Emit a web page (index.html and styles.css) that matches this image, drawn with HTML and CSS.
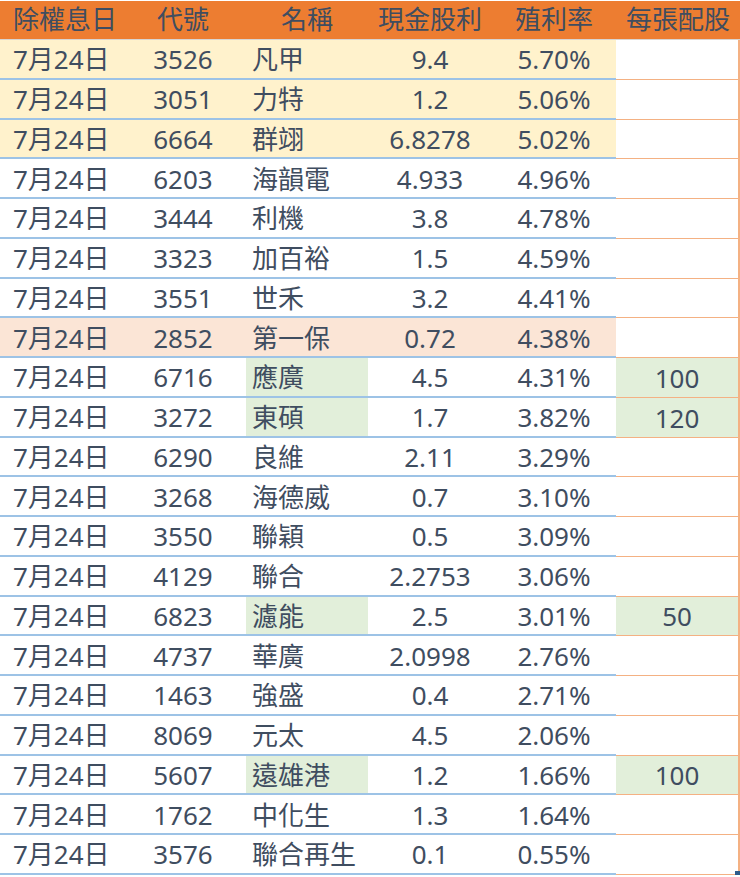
FILE: index.html
```html
<!DOCTYPE html>
<html lang="zh-Hant">
<head>
<meta charset="utf-8">
<link rel="stylesheet" href="styles.css">
</head>
<body>
<div class="sheet">
  <div class="row head">
    <div class="c c1">除權息日</div><div class="c c2">代號</div><div class="c c3 ctr">名稱</div><div class="c c4">現金股利</div><div class="c c5">殖利率</div><div class="c c6">每張配股</div>
  </div>
  <div class="row yellow"><div class="c c1">7月24日</div><div class="c c2">3526</div><div class="c c3">凡甲</div><div class="c c4">9.4</div><div class="c c5">5.70%</div><div class="c c6"></div></div>
  <div class="row yellow"><div class="c c1">7月24日</div><div class="c c2">3051</div><div class="c c3">力特</div><div class="c c4">1.2</div><div class="c c5">5.06%</div><div class="c c6"></div></div>
  <div class="row yellow"><div class="c c1">7月24日</div><div class="c c2">6664</div><div class="c c3">群翊</div><div class="c c4">6.8278</div><div class="c c5">5.02%</div><div class="c c6"></div></div>
  <div class="row"><div class="c c1">7月24日</div><div class="c c2">6203</div><div class="c c3">海韻電</div><div class="c c4">4.933</div><div class="c c5">4.96%</div><div class="c c6"></div></div>
  <div class="row"><div class="c c1">7月24日</div><div class="c c2">3444</div><div class="c c3">利機</div><div class="c c4">3.8</div><div class="c c5">4.78%</div><div class="c c6"></div></div>
  <div class="row"><div class="c c1">7月24日</div><div class="c c2">3323</div><div class="c c3">加百裕</div><div class="c c4">1.5</div><div class="c c5">4.59%</div><div class="c c6"></div></div>
  <div class="row"><div class="c c1">7月24日</div><div class="c c2">3551</div><div class="c c3">世禾</div><div class="c c4">3.2</div><div class="c c5">4.41%</div><div class="c c6"></div></div>
  <div class="row salmon"><div class="c c1">7月24日</div><div class="c c2">2852</div><div class="c c3">第一保</div><div class="c c4">0.72</div><div class="c c5">4.38%</div><div class="c c6"></div></div>
  <div class="row"><div class="c c1">7月24日</div><div class="c c2">6716</div><div class="c c3 green">應廣</div><div class="c c4">4.5</div><div class="c c5">4.31%</div><div class="c c6 green">100</div></div>
  <div class="row"><div class="c c1">7月24日</div><div class="c c2">3272</div><div class="c c3 green">東碩</div><div class="c c4">1.7</div><div class="c c5">3.82%</div><div class="c c6 green">120</div></div>
  <div class="row"><div class="c c1">7月24日</div><div class="c c2">6290</div><div class="c c3">良維</div><div class="c c4">2.11</div><div class="c c5">3.29%</div><div class="c c6"></div></div>
  <div class="row"><div class="c c1">7月24日</div><div class="c c2">3268</div><div class="c c3">海德威</div><div class="c c4">0.7</div><div class="c c5">3.10%</div><div class="c c6"></div></div>
  <div class="row"><div class="c c1">7月24日</div><div class="c c2">3550</div><div class="c c3">聯穎</div><div class="c c4">0.5</div><div class="c c5">3.09%</div><div class="c c6"></div></div>
  <div class="row"><div class="c c1">7月24日</div><div class="c c2">4129</div><div class="c c3">聯合</div><div class="c c4">2.2753</div><div class="c c5">3.06%</div><div class="c c6"></div></div>
  <div class="row"><div class="c c1">7月24日</div><div class="c c2">6823</div><div class="c c3 green">濾能</div><div class="c c4">2.5</div><div class="c c5">3.01%</div><div class="c c6 green">50</div></div>
  <div class="row"><div class="c c1">7月24日</div><div class="c c2">4737</div><div class="c c3">華廣</div><div class="c c4">2.0998</div><div class="c c5">2.76%</div><div class="c c6"></div></div>
  <div class="row"><div class="c c1">7月24日</div><div class="c c2">1463</div><div class="c c3">強盛</div><div class="c c4">0.4</div><div class="c c5">2.71%</div><div class="c c6"></div></div>
  <div class="row"><div class="c c1">7月24日</div><div class="c c2">8069</div><div class="c c3">元太</div><div class="c c4">4.5</div><div class="c c5">2.06%</div><div class="c c6"></div></div>
  <div class="row"><div class="c c1">7月24日</div><div class="c c2">5607</div><div class="c c3 green">遠雄港</div><div class="c c4">1.2</div><div class="c c5">1.66%</div><div class="c c6 green">100</div></div>
  <div class="row"><div class="c c1">7月24日</div><div class="c c2">1762</div><div class="c c3">中化生</div><div class="c c4">1.3</div><div class="c c5">1.64%</div><div class="c c6"></div></div>
  <div class="row last"><div class="c c1">7月24日</div><div class="c c2">3576</div><div class="c c3">聯合再生</div><div class="c c4">0.1</div><div class="c c5">0.55%</div><div class="c c6"><span class="handle"></span></div></div>
</div>
</body>
</html>
```

FILE: styles.css
```css
html, body {
  margin: 0;
  padding: 0;
  background: #ffffff;
}
.sheet {
  width: 740px;
  font-family: "Noto Sans", "Noto Sans CJK TC", sans-serif;
  font-size: 26px;
  color: #3f4d60;
  padding-top: 1px;
}
.row {
  display: grid;
  grid-template-columns: 120px 126px 122px 124px 124px 124px;
  height: 39.75px;
}
.row.head {
  height: 39px;
  background: #ed7d31;
  border-bottom: 1.5px solid #d9d4d0;
  box-sizing: border-box;
}
.c {
  box-sizing: border-box;
  display: flex;
  align-items: center;
  justify-content: center;
  white-space: nowrap;
  border-bottom: 2px solid #9dc3e6;
  line-height: 1;
  padding-top: 1px;
}
.head .c {
  border-bottom: none;
  padding-top: 0;
  padding-bottom: 2px;
}
.c1 {
  justify-content: flex-start;
  padding-left: 13px;
}
.c3 {
  justify-content: flex-start;
  padding-left: 6px;
}
.c3.ctr {
  justify-content: center;
  padding-left: 0;
}
.c6 {
  border-bottom: 1.5px solid #f4b183;
  border-right: 2px solid #f4b183;
  background: #ffffff;
  position: relative;
}
.head .c6 {
  background: transparent;
  border-right: none;
}
.yellow .c { background: #fff2cc; }
.salmon .c { background: #fbe5d6; }
.yellow .c6, .salmon .c6 { background: #ffffff; }
.c.green { background: #e2efda; }
.handle {
  position: absolute;
  right: -2px;
  bottom: -2px;
  width: 5px;
  height: 5px;
  background: #2e5c8a;
}
```
